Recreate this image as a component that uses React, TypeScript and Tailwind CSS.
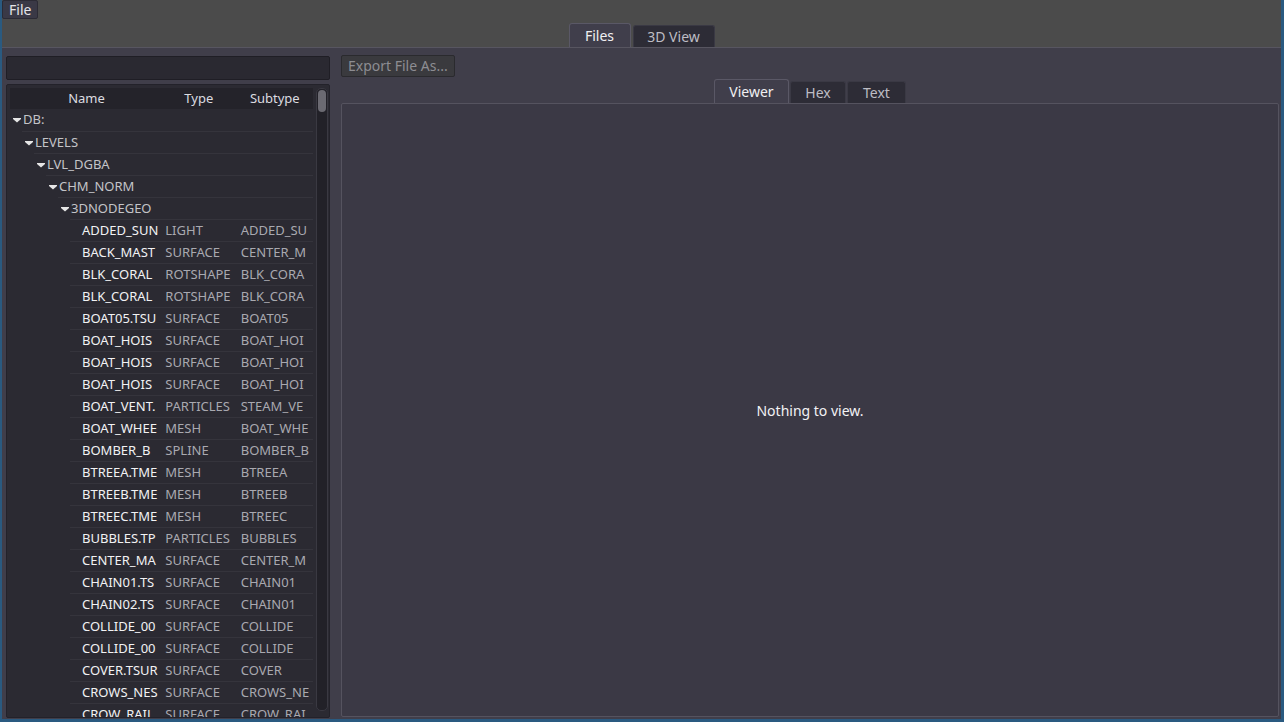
import React from "react";

type Leaf = { name: string; type: string; sub: string };

const folders = ["DB:", "LEVELS", "LVL_DGBA", "CHM_NORM", "3DNODEGEO"];

const leaves: Leaf[] = [
  { name: "ADDED_SUN", type: "LIGHT", sub: "ADDED_SU" },
  { name: "BACK_MAST", type: "SURFACE", sub: "CENTER_M" },
  { name: "BLK_CORAL", type: "ROTSHAPE", sub: "BLK_CORA" },
  { name: "BLK_CORAL", type: "ROTSHAPE", sub: "BLK_CORA" },
  { name: "BOAT05.TSU", type: "SURFACE", sub: "BOAT05" },
  { name: "BOAT_HOIS", type: "SURFACE", sub: "BOAT_HOI" },
  { name: "BOAT_HOIS", type: "SURFACE", sub: "BOAT_HOI" },
  { name: "BOAT_HOIS", type: "SURFACE", sub: "BOAT_HOI" },
  { name: "BOAT_VENT.", type: "PARTICLES", sub: "STEAM_VE" },
  { name: "BOAT_WHEE", type: "MESH", sub: "BOAT_WHE" },
  { name: "BOMBER_B", type: "SPLINE", sub: "BOMBER_B" },
  { name: "BTREEA.TME", type: "MESH", sub: "BTREEA" },
  { name: "BTREEB.TME", type: "MESH", sub: "BTREEB" },
  { name: "BTREEC.TME", type: "MESH", sub: "BTREEC" },
  { name: "BUBBLES.TP", type: "PARTICLES", sub: "BUBBLES" },
  { name: "CENTER_MA", type: "SURFACE", sub: "CENTER_M" },
  { name: "CHAIN01.TS", type: "SURFACE", sub: "CHAIN01" },
  { name: "CHAIN02.TS", type: "SURFACE", sub: "CHAIN01" },
  { name: "COLLIDE_00", type: "SURFACE", sub: "COLLIDE" },
  { name: "COLLIDE_00", type: "SURFACE", sub: "COLLIDE" },
  { name: "COVER.TSUR", type: "SURFACE", sub: "COVER" },
  { name: "CROWS_NES", type: "SURFACE", sub: "CROWS_NE" },
  { name: "CROW_RAIL", type: "SURFACE", sub: "CROW_RAI" },
];

const lineStarts = ["ml-0", "ml-[12px]", "ml-[24px]", "ml-[36px]", "ml-[48px]"];

function Arrow() {
  return (
    <svg width="10" height="8" viewBox="0 0 10 8" className="mr-[1px] shrink-0">
      <path d="M1 2 L9 2 L9 3 L5 6.5 L1 3 Z" fill="#e6e6e6" />
    </svg>
  );
}

function FolderRow({ label, level }: { label: string; level: number }) {
  return (
    <div
      className={`h-[22px] shrink-0 flex items-center ${lineStarts[level]} ${
        level > 0 ? "border-t border-[#35343c]" : ""
      }`}
    >
      <div className="flex items-center pl-[2px] text-[#c4c4c8]">
        <Arrow />
        <span>{label}</span>
      </div>
    </div>
  );
}

export default function App() {
  return (
    <div
      className="w-[1284px] h-[722px] bg-[#2a5a80] pl-[2px] pr-[3px] pb-[3px] flex flex-col overflow-hidden text-[13px]"
      style={{ fontFamily: '"Noto Sans", "DejaVu Sans", sans-serif' }}
    >
      {/* Top bar */}
      <div className="h-[48px] shrink-0 bg-[#4b4b4b] border-b border-[#575560] flex flex-col">
        <div className="h-[24px] flex items-start">
          <button className="h-[19px] px-[6px] rounded-[2px] bg-[#3a3946] border border-[#2c2b35] text-[#e4e4e8] text-[14px] leading-[16px]">
            File
          </button>
        </div>
        <div className="flex-1 flex items-end justify-center">
          <div className="h-[24px] w-[62px] rounded-t-[3px] bg-[#403e4b] border border-b-0 border-[#5a5866] text-[#f0f0f2] text-[14px] flex items-center justify-center">
            Files
          </div>
          <div className="h-[22px] w-[82px] ml-[2px] rounded-t-[3px] bg-[#2d2c36] border border-b-0 border-[#3a3944] text-[#bdbdc4] text-[14px] flex items-center justify-center">
            3D View
          </div>
        </div>
      </div>

      {/* Main area */}
      <div className="flex-1 bg-[#403e4a] flex pl-[4px] pr-[2px] pt-[8px] pb-[1px] gap-[11px] min-h-0">
        {/* Left column */}
        <div className="w-[324px] flex flex-col gap-[4px] min-h-0">
          <div className="h-[24px] shrink-0 rounded-[2px] bg-[#2a2931] border border-[#1f1e25]" />
          <div className="flex-1 min-h-0 rounded-[2px] bg-[#2b2a32] border border-[#23222a] pl-[3px] pr-[1px] pt-[3px] flex gap-[3px] overflow-hidden">
            <div className="w-[305px] flex flex-col min-h-0 overflow-hidden">
              <div className="h-[21px] shrink-0 bg-[#24232a] flex items-center text-[#dcdce0]">
                <div className="w-[152px] text-center pl-[2px]">Name</div>
                <div className="w-[76px] text-center">Type</div>
                <div className="w-[77px] text-center">Subtype</div>
              </div>
              {folders.map((f, i) => (
                <FolderRow key={f} label={f} level={i} />
              ))}
              {leaves.map((l, i) => (
                <div key={i} className="h-[22px] shrink-0 flex items-center ml-[60px] border-t border-[#35343c]">
                  <div className="w-[92px] pl-[12px] overflow-hidden whitespace-nowrap text-[#f2f2f4]">{l.name}</div>
                  <div className="w-[76px] pl-[4px] overflow-hidden whitespace-nowrap text-[#a9a9b0]">{l.type}</div>
                  <div className="w-[77px] pl-[4px] overflow-hidden whitespace-nowrap text-[#a9a9b0]">{l.sub}</div>
                </div>
              ))}
            </div>
            <div className="w-[12px] mb-[6px] rounded-[5px] bg-[#222128] border border-[#3a3942] p-[1px]">
              <div className="h-[22px] rounded-[4px] bg-[#6b6a72]" />
            </div>
          </div>
        </div>

        {/* Right column */}
        <div className="flex-1 flex flex-col min-w-0">
          <div className="h-[22px] shrink-0 flex items-start -mt-[1px]">
            <button className="h-[22px] px-[6px] rounded-[2px] bg-[#3a3a3e] border border-[#2a2a2e] text-[#8d8d92] text-[14px] leading-[18px]">
              Export File As...
            </button>
          </div>
          <div className="h-[26px] shrink-0 flex items-end justify-center">
            <div className="h-[24px] w-[75px] rounded-t-[3px] bg-[#403e4b] border border-b-0 border-[#5a5866] text-[#f0f0f2] text-[14px] flex items-center justify-center">
              Viewer
            </div>
            <div className="h-[22px] w-[56px] ml-[1px] rounded-t-[3px] bg-[#2d2c36] border border-b-0 border-[#3a3944] text-[#bdbdc4] text-[14px] flex items-center justify-center">
              Hex
            </div>
            <div className="h-[22px] w-[59px] ml-[1px] rounded-t-[3px] bg-[#2d2c36] border border-b-0 border-[#3a3944] text-[#bdbdc4] text-[14px] flex items-center justify-center">
              Text
            </div>
          </div>
          <div className="flex-1 mb-[1px] rounded-[2px] bg-[#3b3945] border border-[#55535f] flex items-center justify-center">
            <span className="text-[#f2f2f4] text-[14px]">Nothing to view.</span>
          </div>
        </div>
      </div>
    </div>
  );
}
